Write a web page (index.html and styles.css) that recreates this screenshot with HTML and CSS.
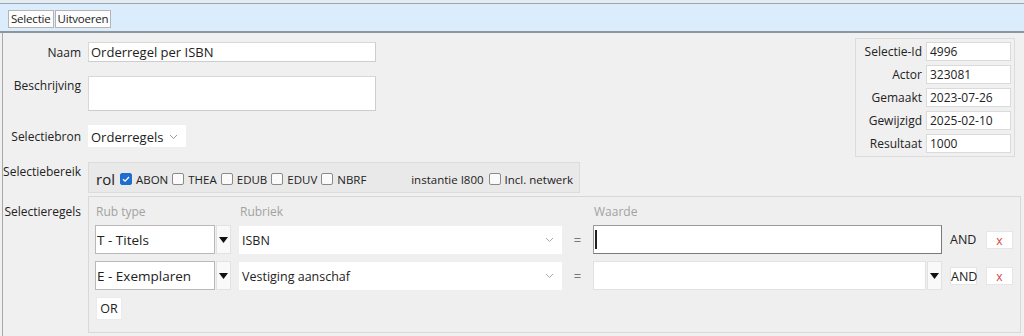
FILE: index.html
```html
<!DOCTYPE html>
<html lang="nl">
<head>
  <meta charset="UTF-8">
  <title>Selectie</title>
  <link rel="stylesheet" href="styles.css">
</head>
<body>
  <div class="topline"></div>
  <div class="toolbar">
    <button class="tbtn">Selectie</button>
    <button class="tbtn">Uitvoeren</button>
  </div>

  <div class="main">
    <div class="top">
      <div class="form">
        <label class="lbl lbl-mid">Naam</label>
        <div class="field name-field">Orderregel per ISBN</div>

        <label class="lbl lbl-top">Beschrijving</label>
        <div class="field desc-field"></div>

        <label class="lbl lbl-mid">Selectiebron</label>
        <div class="plainselect bron">
          <span>Orderregels</span>
          <svg class="chev" width="9" height="6" viewBox="0 0 9 6"><polyline points="1,1 4.5,4.5 8,1" fill="none" stroke="#9a9a9a" stroke-width="1"/></svg>
        </div>

        <label class="lbl lbl-bereik">Selectiebereik</label>
        <div class="bereik">
          <span class="rol">rol</span>
          <span class="cb checked"><svg width="12" height="12" viewBox="0 0 12 12"><polyline points="3,6.2 5.1,8.2 9,4" fill="none" stroke="#fff" stroke-width="1.3"/></svg></span>
          <span class="cbtext">ABON</span>
          <span class="cb"></span><span class="cbtext">THEA</span>
          <span class="cb"></span><span class="cbtext">EDUB</span>
          <span class="cb"></span><span class="cbtext">EDUV</span>
          <span class="cb"></span><span class="cbtext">NBRF</span>
          <span class="instantie">instantie I800</span>
          <span class="cb"></span><span class="cbtext last">Incl. netwerk</span>
        </div>
      </div>

      <div class="info">
        <label>Selectie-Id</label><div class="infofield">4996</div>
        <label>Actor</label><div class="infofield">323081</div>
        <label>Gemaakt</label><div class="infofield">2023-07-26</div>
        <label>Gewijzigd</label><div class="infofield">2025-02-10</div>
        <label>Resultaat</label><div class="infofield">1000</div>
      </div>
    </div>

    <div class="regels-row">
      <label class="lbl lbl-regels">Selectieregels</label>
      <div class="regels">
        <div class="rgrid">
          <div class="head">Rub type</div>
          <div class="head">Rubriek</div>
          <div></div>
          <div class="head">Waarde</div>
          <div></div>
          <div></div>

          <div class="combo">
            <div class="rubtype">T - Titels</div>
            <div class="arrowbtn"><svg width="9" height="6" viewBox="0 0 9 6"><polygon points="0,0 9,0 4.5,6" fill="#111"/></svg></div>
          </div>
          <div class="plainselect rubriek">
            <span>ISBN</span>
            <svg class="chev" width="9" height="6" viewBox="0 0 9 6"><polyline points="1,1 4.5,4.5 8,1" fill="none" stroke="#a8a8a8" stroke-width="1"/></svg>
          </div>
          <div class="eq">=</div>
          <div class="waarde focused"><span class="caret"></span></div>
          <div class="andtext">AND</div>
          <button class="xbtn">x</button>

          <div class="combo">
            <div class="rubtype">E - Exemplaren</div>
            <div class="arrowbtn"><svg width="9" height="6" viewBox="0 0 9 6"><polygon points="0,0 9,0 4.5,6" fill="#111"/></svg></div>
          </div>
          <div class="plainselect rubriek">
            <span>Vestiging aanschaf</span>
            <svg class="chev" width="9" height="6" viewBox="0 0 9 6"><polyline points="1,1 4.5,4.5 8,1" fill="none" stroke="#a8a8a8" stroke-width="1"/></svg>
          </div>
          <div class="eq">=</div>
          <div class="combo">
            <div class="waarde waarde-sel"></div>
            <div class="arrowbtn"><svg width="9" height="6" viewBox="0 0 9 6"><polygon points="0,0 9,0 4.5,6" fill="#111"/></svg></div>
          </div>
          <button class="andbtn">AND</button>
          <button class="xbtn">x</button>
        </div>
        <button class="orbtn">OR</button>
      </div>
    </div>
  </div>
</body>
</html>
```

FILE: styles.css
```css
/* Page */
body {
  margin: 0;
  background-color: #f0f0f0;
  font-family: "Open Sans", "Noto Sans", sans-serif;
  font-size: 12px;
  color: #222;
}
button {
  font-family: inherit;
  cursor: pointer;
}

/* Toolbar */
.topline {
  height: 3px;
  background-color: #e4ecf1;
}
.toolbar {
  box-sizing: border-box;
  height: 30px;
  padding: 6px 0 0 8px;
  background-color: #dbedfd;
  border-top: 1px solid #9ba7b3;
  border-bottom: 2px solid #8d959d;
  display: flex;
  align-items: flex-start;
  gap: 1px;
}
.tbtn {
  height: 18px;
  padding: 0 2px;
  font-size: 11.5px;
  letter-spacing: -0.2px;
  color: #222;
  background-color: #fdfdfd;
  border: 1px solid #b4b4b4;
  border-radius: 0;
  line-height: 16px;
}

/* Main area */
.main {
  margin-left: 2px;
  border-left: 1px solid #a8a8a8;
  padding-right: 3px;
  height: 303px;
}
.top {
  display: flex;
  justify-content: space-between;
  align-items: flex-start;
}
.form {
  display: grid;
  grid-template-columns: 78px auto;
  column-gap: 7px;
  row-gap: 14px;
  padding-top: 9px;
  align-items: start;
}
.lbl {
  text-align: right;
  line-height: 17px;
  white-space: nowrap;
}
.lbl-mid {
  align-self: center;
}
.lbl-top {
  padding-top: 1px;
}
.lbl-bereik {
  margin-top: 1px;
  padding-top: 1px;
}
.field {
  box-sizing: border-box;
  width: 288px;
  background-color: #fff;
  border: 1px solid #cdcdcd;
  border-top-color: #d8d8d8;
  border-left-color: #d8d8d8;
  font-size: 13px;
  padding-left: 2px;
}
.name-field {
  height: 20px;
  line-height: 18px;
}
.desc-field {
  height: 35px;
}
.plainselect {
  box-sizing: border-box;
  background-color: #fff;
  display: flex;
  align-items: center;
  justify-content: space-between;
  padding: 0 8px 0 3px;
  white-space: nowrap;
}
.bron {
  width: 98px;
  height: 22px;
  font-size: 13px;
  padding-top: 2px;
}
.chev {
  display: block;
}

/* Selectiebereik */
.bereik {
  box-sizing: border-box;
  margin-top: 1px;
  width: 492px;
  height: 31px;
  background-color: #e9e9e9;
  border: 1px solid #dcdcdc;
  padding: 3px 6px 0 7px;
  display: flex;
  align-items: center;
  white-space: nowrap;
  font-size: 11.5px;
}
.bereik span {
  flex-shrink: 0;
}
.rol {
  font-size: 15px;
  margin-right: 5px;
}
.cb {
  box-sizing: border-box;
  width: 12px;
  height: 12px;
  border: 1px solid #8a8a8a;
  border-radius: 2px;
  background-color: #fafafa;
  margin-right: 4px;
}
.cb.checked {
  background-color: #1f6ecf;
  border-color: #1f6ecf;
}
.cb svg {
  display: block;
  margin: -1px;
}
.cbtext {
  margin-right: 4px;
}
.cbtext.last {
  margin-right: 0;
}
.instantie {
  margin-left: auto;
  margin-right: 5px;
}

/* Info box */
.info {
  box-sizing: border-box;
  margin: 5px 6px 0 0;
  width: 160px;
  border: 1px solid #dcdcdc;
  padding: 3px 4px 3px 0;
  display: grid;
  grid-template-columns: 66px 85px;
  column-gap: 4px;
  row-gap: 4px;
  align-items: center;
}
.info label {
  text-align: right;
}
.infofield {
  box-sizing: border-box;
  height: 19px;
  line-height: 17px;
  background-color: #fff;
  border: 1px solid #dadada;
  padding-left: 3px;
}

/* Selectieregels */
.regels-row {
  display: grid;
  grid-template-columns: 78px auto;
  column-gap: 7px;
  margin-top: 3px;
}
.lbl-regels {
  padding-top: 7px;
}
.regels {
  box-sizing: border-box;
  height: 137px;
  border: 1px solid #d8d8d8;
  background-color: #efefef;
  padding: 7px 0 0 6px;
}
.rgrid {
  display: grid;
  grid-template-columns: 144px 323px 31px 356px 37px 27px;
  grid-template-rows: 14px 29px 29px;
  row-gap: 7px;
  align-items: center;
}
.head {
  color: #a2a2a2;
  align-self: start;
  padding-left: 1px;
  line-height: 16px;
}
.combo {
  display: flex;
  gap: 1px;
  height: 29px;
}
.rubtype {
  box-sizing: border-box;
  width: 120px;
  height: 29px;
  line-height: 28px;
  background-color: #fff;
  border: 1px solid #b9b9b9;
  font-size: 13.5px;
  padding-left: 1px;
}
.arrowbtn {
  box-sizing: border-box;
  width: 15px;
  height: 29px;
  background-color: #f9f9f9;
  border: 1px solid #e2e2e2;
  padding: 11px 0 0 2px;
}
.arrowbtn svg {
  display: block;
}
.rubriek {
  height: 28px;
  width: 323px;
  font-size: 12.5px;
  align-self: end;
}
.eq {
  text-align: center;
  color: #777;
  font-size: 13px;
}
.waarde {
  box-sizing: border-box;
  width: 349px;
  height: 29px;
  background-color: #fff;
  border: 1px solid #e2e2e2;
  display: flex;
  align-items: center;
}
.waarde.focused {
  border-color: #7a7a7a;
  border-top-color: #9a9a9a;
  border-left-color: #9a9a9a;
}
.waarde-sel {
  width: 333px;
}
.caret {
  width: 2px;
  height: 19px;
  margin-left: 1px;
  background-color: #222;
}
.andtext {
  padding-left: 1px;
  font-size: 12.5px;
}
.andbtn {
  box-sizing: border-box;
  width: 27px;
  height: 18px;
  margin-left: 1px;
  padding: 0;
  font-size: 12.5px;
  color: #222;
  background-color: #fff;
  border: 1px solid #e4e4e4;
}
.xbtn {
  box-sizing: border-box;
  width: 27px;
  height: 18px;
  padding: 0;
  font-size: 12px;
  color: #d64545;
  background-color: #fff;
  border: 1px solid #e6e6e6;
}
.orbtn {
  display: block;
  margin: 7px 0 0 1px;
  width: 26px;
  height: 23px;
  padding: 0;
  font-size: 12.5px;
  color: #222;
  background-color: #fff;
  border: 1px solid #ebebeb;
}
```
